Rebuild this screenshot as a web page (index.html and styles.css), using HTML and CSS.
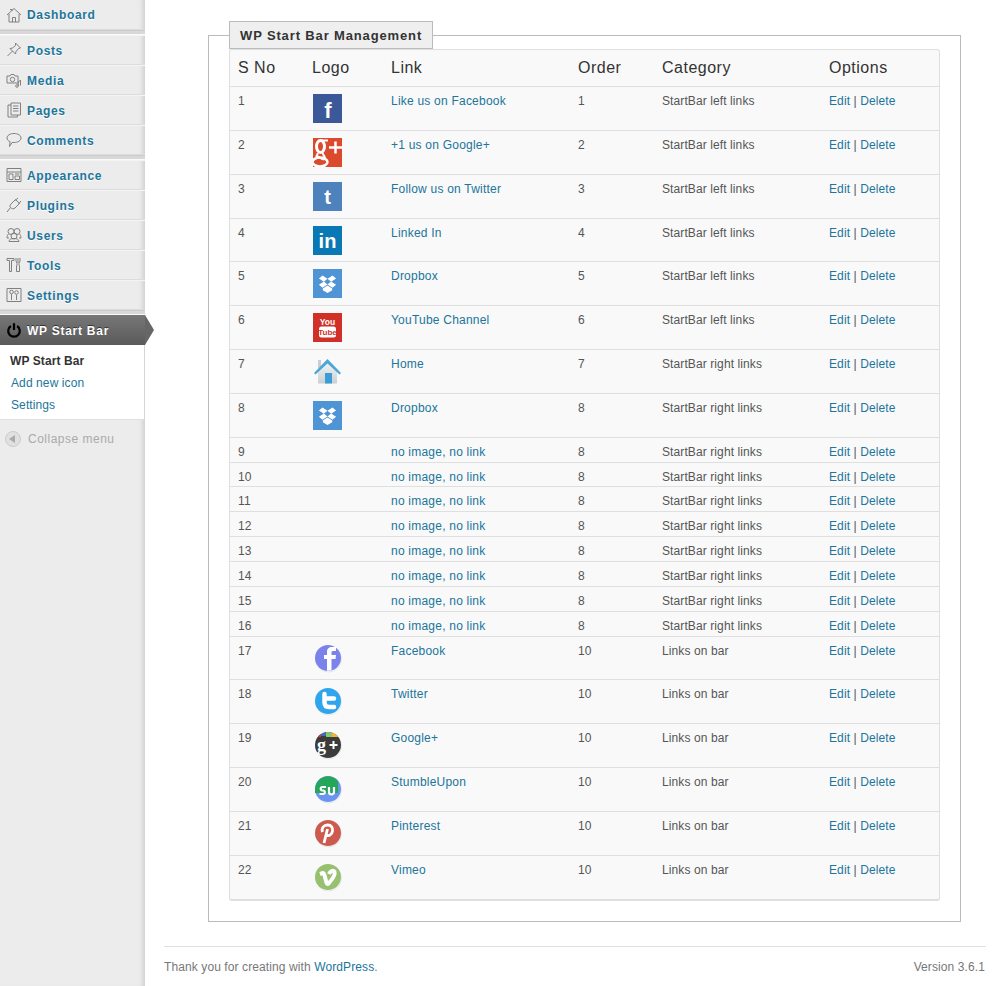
FILE: index.html
```html
<!DOCTYPE html>
<html lang="en">
<head>
    <meta charset="UTF-8" />
    <meta name="viewport" content="width=device-width, initial-scale=1.0"/>
    <title>WP Start Bar Management</title>
    <link rel="stylesheet" href="styles.css">
</head>
<body>

<svg class="defs" width="0" height="0">
    <symbol id="dropbox" viewBox="0 0 29 29">
        <rect width="29" height="29" fill="#4f94d4"/>
        <path d="M9.5 6.5l5 3.2-3.6 3-5-3.1zM19.500 6.500l-5 3.200 3.600 3 5-3.100zM5.900 15.700l5-3.100 3.600 3-5 3.100zM23.100 15.700l-5-3.100-3.600 3 5 3.100zM9.800 19.500l4.700-3 4.700 3v1.700l-4.700 2.800-4.700-2.800z" fill="#fff"/>
    </symbol>
    <symbol id="disc" viewBox="0 0 29 29">
        <circle cx="15.500" cy="15" r="13" fill="#fff" stroke="#e6e6e6"/>
    </symbol>
    <clipPath id="round"><circle cx="15" cy="14" r="13"/></clipPath>
    <linearGradient id="wall" x1="0" y1="0" x2="0" y2="1">
        <stop offset="0" stop-color="#f2f5f6"/>
        <stop offset="1" stop-color="#c9cfd2"/>
    </linearGradient>
</svg>

<aside class="sidebar">
    <ul class="menu">
        <li class="item first">
            <svg class="mi" viewBox="0 0 16 16"><path d="M1 8l7-6.500L15 8M3 7v8h10V7M6.500 15v-4.500h3V15M4 2.500h2v1.500" /></svg>
            <a href="#">Dashboard</a>
        </li>
        <li class="sep"></li>
        <li class="item">
            <svg class="mi" viewBox="0 0 16 16"><path d="M9.500 1l5 5-2 .5-2.500 3-.5 2.500L4 6.500l2.500-.5 3-2.500zM6.500 9L1.500 14" /></svg>
            <a href="#">Posts</a>
        </li>
        <li class="item">
            <svg class="mi" viewBox="0 0 16 16"><path d="M1 4h3l1-1.500h3L9 4h3v7H1z"/><circle cx="6.500" cy="7.500" r="2.200"/><circle cx="11" cy="14" r="1.300"/><path d="M14.500 8v5.500M12.300 14V9.500l2.200-1"/></svg>
            <a href="#">Media</a>
        </li>
        <li class="item">
            <svg class="mi" viewBox="0 0 16 16"><path d="M5 1h9.500v12H5zM5 3H2v12h9.500v-2M7 4h5.500M7 6.500h5.500M7 9h5.500"/></svg>
            <a href="#">Pages</a>
        </li>
        <li class="item">
            <svg class="mi" viewBox="0 0 16 16"><path d="M8 1.500c3.800 0 7 1.800 7 4.500s-3.200 4.500-7 4.500c-.7 0-1.300 0-1.800-.1L3.500 14.500l.6-4.800C2.200 8.900 1 7.600 1 6c0-2.700 3.200-4.500 7-4.500z"/></svg>
            <a href="#">Comments</a>
        </li>
        <li class="sep"></li>
        <li class="item">
            <svg class="mi" viewBox="0 0 16 16"><path d="M1 1.500h14v13H1zM1 5h14M3 7h4v5.500H3zM9 7h4.500M9 9h4.500v3.500H9z"/></svg>
            <a href="#">Appearance</a>
        </li>
        <li class="item">
            <svg class="mi" viewBox="0 0 16 16"><path d="M5 7l4.500-4.500 4 4L9 11c-1.500 1.200-3 1-4.500-.5C3.500 9.500 3.800 8.200 5 7zM9 3.500l3-2.500M12.500 7l2.500-3M4.500 10.500L1 15"/></svg>
            <a href="#">Plugins</a>
        </li>
        <li class="item">
            <svg class="mi" viewBox="0 0 16 16"><circle cx="5" cy="4.500" r="3"/><circle cx="11" cy="4.500" r="3"/><circle cx="8" cy="9" r="3"/><path d="M3 14.500c0-2 2-3 5-3s5 1 5 3zM2.500 7C1.500 8 1 9 1 11h2M13.500 7c1 1 1.500 2 1.500 4h-2"/></svg>
            <a href="#">Users</a>
        </li>
        <li class="item">
            <svg class="mi" viewBox="0 0 16 16"><path d="M1 1.500h7v2H5.500v11h-2v-11H1zM12 1v5M10 1v3l1 2.500v1.500l-.5 1v5.500h3V9L13 8V6.500L14 4V1"/></svg>
            <a href="#">Tools</a>
        </li>
        <li class="item">
            <svg class="mi" viewBox="0 0 16 16"><path d="M1 1.500h14v13H1zM5.500 7v6M10.500 8v5"/><circle cx="5.500" cy="5" r="1.800"/><circle cx="10.500" cy="5.500" r="1.800"/></svg>
            <a href="#">Settings</a>
        </li>
        <li class="sep"></li>
        <li class="current">
            <svg class="power" viewBox="0 0 18 18"><path d="M5.500 4.500a6.500 6.500 0 1 0 7 0M9 1.500V9"/></svg>
            <a href="#">WP Start Bar</a>
        </li>
        <li class="submenu">
            <a class="on" href="#">WP Start Bar</a>
            <a href="#">Add new icon</a>
            <a href="#">Settings</a>
        </li>
        <li class="collapse">
            <span class="collapse-btn"><span class="tri"></span></span>
            Collapse menu
        </li>
    </ul>
</aside>

<main class="content">
    <fieldset class="box">
        <legend>WP Start Bar Management</legend>
        <table class="links">
            <colgroup>
                <col class="c1"><col class="c2"><col class="c3"><col class="c4"><col class="c5"><col class="c6">
            </colgroup>
            <thead>
                <tr><th>S No</th><th>Logo</th><th>Link</th><th>Order</th><th>Category</th><th>Options</th></tr>
            </thead>
            <tbody>
                <tr class="big"><td>1</td><td><svg class="logo" viewBox="0 0 29 29"><rect width="29" height="29" fill="#3b5998"/><text x="15" y="24" class="g" font-size="22" fill="#fff">f</text></svg></td><td class="lnk"><a href="#">Like us on Facebook</a></td><td>1</td><td>StartBar left links</td><td class="opt"><a href="#">Edit</a> | <a href="#">Delete</a></td></tr>
                <tr class="big"><td>2</td><td><svg class="logo" viewBox="0 0 29 29"><rect width="29" height="29" fill="#dc4a2e"/><g fill="none" stroke="#fff"><ellipse cx="7.500" cy="8.500" rx="4" ry="6" stroke-width="3"/><ellipse cx="7" cy="24" rx="7.500" ry="4.500" stroke-width="2.500"/><path d="M5 15l-1.500 3 6 3c3 1.500 3-2 1-4l-1-2M8 2.500h7" stroke-width="2"/><path d="M16 9.500h13M22.500 3.500v12" stroke-width="2.500"/></g></svg></td><td class="lnk"><a href="#">+1 us on Google+</a></td><td>2</td><td>StartBar left links</td><td class="opt"><a href="#">Edit</a> | <a href="#">Delete</a></td></tr>
                <tr class="big"><td>3</td><td><svg class="logo" viewBox="0 0 29 29"><rect width="29" height="29" fill="#4d82bd"/><text x="14.500" y="22" class="g" font-size="20" fill="#fff">t</text></svg></td><td class="lnk"><a href="#">Follow us on Twitter</a></td><td>3</td><td>StartBar left links</td><td class="opt"><a href="#">Edit</a> | <a href="#">Delete</a></td></tr>
                <tr class="big"><td>4</td><td><svg class="logo" viewBox="0 0 29 29"><rect width="29" height="29" fill="#0a78b5"/><text x="14.500" y="22" class="g" font-size="20" fill="#fff">in</text></svg></td><td class="lnk"><a href="#">Linked In</a></td><td>4</td><td>StartBar left links</td><td class="opt"><a href="#">Edit</a> | <a href="#">Delete</a></td></tr>
                <tr class="big"><td>5</td><td><svg class="logo"><use href="#dropbox"/></svg></td><td class="lnk"><a href="#">Dropbox</a></td><td>5</td><td>StartBar left links</td><td class="opt"><a href="#">Edit</a> | <a href="#">Delete</a></td></tr>
                <tr class="big"><td>6</td><td><svg class="logo" viewBox="0 0 29 29"><rect width="29" height="29" fill="#d03027"/><text x="14.500" y="11.500" class="g" font-size="8.500" fill="#fff">You</text><rect x="6" y="13.500" width="17" height="11" rx="2.500" fill="#fff"/><text x="14.500" y="22" class="g" font-size="8" fill="#d03027">Tube</text></svg></td><td class="lnk"><a href="#">YouTube Channel</a></td><td>6</td><td>StartBar left links</td><td class="opt"><a href="#">Edit</a> | <a href="#">Delete</a></td></tr>
                <tr class="big"><td>7</td><td><svg class="logo" viewBox="0 0 29 29"><path d="M5 3h3v8H5z" fill="#c8ced2"/><path d="M5 14l9.500-9L24 14v12.500H5z" fill="url(#wall)"/><path d="M12 16h7v10.500h-7z" fill="#3d9bd6"/><path d="M1 16L14.500 2 28 16l-1.500 1.500L14.500 6.500 2.500 17.500z" fill="#4ca6d8"/></svg></td><td class="lnk"><a href="#">Home</a></td><td>7</td><td>StartBar right links</td><td class="opt"><a href="#">Edit</a> | <a href="#">Delete</a></td></tr>
                <tr class="big"><td>8</td><td><svg class="logo"><use href="#dropbox"/></svg></td><td class="lnk"><a href="#">Dropbox</a></td><td>8</td><td>StartBar right links</td><td class="opt"><a href="#">Edit</a> | <a href="#">Delete</a></td></tr>
                <tr class="small"><td>9</td><td></td><td class="lnk"><a href="#">no image, no link</a></td><td>8</td><td>StartBar right links</td><td class="opt"><a href="#">Edit</a> | <a href="#">Delete</a></td></tr>
                <tr class="small"><td>10</td><td></td><td class="lnk"><a href="#">no image, no link</a></td><td>8</td><td>StartBar right links</td><td class="opt"><a href="#">Edit</a> | <a href="#">Delete</a></td></tr>
                <tr class="small"><td>11</td><td></td><td class="lnk"><a href="#">no image, no link</a></td><td>8</td><td>StartBar right links</td><td class="opt"><a href="#">Edit</a> | <a href="#">Delete</a></td></tr>
                <tr class="small"><td>12</td><td></td><td class="lnk"><a href="#">no image, no link</a></td><td>8</td><td>StartBar right links</td><td class="opt"><a href="#">Edit</a> | <a href="#">Delete</a></td></tr>
                <tr class="small"><td>13</td><td></td><td class="lnk"><a href="#">no image, no link</a></td><td>8</td><td>StartBar right links</td><td class="opt"><a href="#">Edit</a> | <a href="#">Delete</a></td></tr>
                <tr class="small"><td>14</td><td></td><td class="lnk"><a href="#">no image, no link</a></td><td>8</td><td>StartBar right links</td><td class="opt"><a href="#">Edit</a> | <a href="#">Delete</a></td></tr>
                <tr class="small"><td>15</td><td></td><td class="lnk"><a href="#">no image, no link</a></td><td>8</td><td>StartBar right links</td><td class="opt"><a href="#">Edit</a> | <a href="#">Delete</a></td></tr>
                <tr class="small"><td>16</td><td></td><td class="lnk"><a href="#">no image, no link</a></td><td>8</td><td>StartBar right links</td><td class="opt"><a href="#">Edit</a> | <a href="#">Delete</a></td></tr>
                <tr class="big"><td>17</td><td><svg class="logo" viewBox="0 0 29 29"><use href="#disc"/><circle cx="15" cy="14" r="13" fill="#7b83eb"/><path d="M14 26.800V15h-3v-4h3V8c0-3.500 2-5 5-5h4v4h-3c-1 0-1.500.5-1.500 1.500V11H23l-.5 4h-4v11.500z" fill="#fff"/></svg></td><td class="lnk"><a href="#">Facebook</a></td><td>10</td><td>Links on bar</td><td class="opt"><a href="#">Edit</a> | <a href="#">Delete</a></td></tr>
                <tr class="big"><td>18</td><td><svg class="logo" viewBox="0 0 29 29"><use href="#disc"/><circle cx="15" cy="14" r="13" fill="#2fa5ee"/><path d="M11.500 7v8.500q0 4.500 4.500 4.500h5M11.500 11.500H21" fill="none" stroke="#fff" stroke-width="4.500" stroke-linecap="round"/></svg></td><td class="lnk"><a href="#">Twitter</a></td><td>10</td><td>Links on bar</td><td class="opt"><a href="#">Edit</a> | <a href="#">Delete</a></td></tr>
                <tr class="big"><td>19</td><td><svg class="logo" viewBox="0 0 29 29"><use href="#disc"/><circle cx="15" cy="14" r="13" fill="#3b3b3b"/><g clip-path="url(#round)"><rect x="2" y="0" width="6" height="6" fill="#d6342c"/><rect x="8" y="0" width="5" height="5" fill="#3b6fb5"/><rect x="13" y="0" width="6" height="6" fill="#8cc36b"/><rect x="19" y="0" width="8" height="6" fill="#f2b632"/></g><text x="4" y="20" class="s" font-size="18" fill="#fff">g</text><path d="M16.500 14h8M20.500 10v8" stroke="#fff" stroke-width="2"/></svg></td><td class="lnk"><a href="#">Google+</a></td><td>10</td><td>Links on bar</td><td class="opt"><a href="#">Edit</a> | <a href="#">Delete</a></td></tr>
                <tr class="big"><td>20</td><td><svg class="logo" viewBox="0 0 29 29"><use href="#disc"/><circle cx="15" cy="14" r="13" fill="#6b94f0"/><path d="M2 14a13 13 0 0 1 23-8v12H2z" fill="#25a75b"/><path d="M6.500 19h4a1.800 1.800 0 0 0 0-3.500H9A1.800 1.800 0 0 1 9 12h4M16 12v5a2.500 2.500 0 0 0 5 0v-5" fill="none" stroke="#fff" stroke-width="2.200"/></svg></td><td class="lnk"><a href="#">StumbleUpon</a></td><td>10</td><td>Links on bar</td><td class="opt"><a href="#">Edit</a> | <a href="#">Delete</a></td></tr>
                <tr class="big"><td>21</td><td><svg class="logo" viewBox="0 0 29 29"><use href="#disc"/><circle cx="15" cy="14" r="13" fill="#cc5a4e"/><path d="M9.500 13C8 9 11 6 14.500 6c4 0 5.500 3 5 6-.5 4-4 5.500-6 4M14.500 10L11 24" fill="none" stroke="#fff" stroke-width="2.800"/></svg></td><td class="lnk"><a href="#">Pinterest</a></td><td>10</td><td>Links on bar</td><td class="opt"><a href="#">Edit</a> | <a href="#">Delete</a></td></tr>
                <tr class="big"><td>22</td><td><svg class="logo" viewBox="0 0 29 29"><use href="#disc"/><circle cx="15" cy="14" r="13" fill="#97c170"/><path d="M7 11l1.500-.5c2-1.500 3 .5 4 5.500s2 6 3.500 4c3.500-4 6.500-8 5.500-11-1-2-4-1.500-5.500 2" fill="none" stroke="#fff" stroke-width="4"/></svg></td><td class="lnk"><a href="#">Vimeo</a></td><td>10</td><td>Links on bar</td><td class="opt"><a href="#">Edit</a> | <a href="#">Delete</a></td></tr>
            </tbody>
        </table>
    </fieldset>

    <footer class="foot">
        <span>Thank you for creating with <a href="#">WordPress</a>.</span>
        <span>Version 3.6.1</span>
    </footer>
</main>

</body>
</html>
```
FILE: styles.css
```css
html, body { margin: 0; padding: 0; }
body {
    font-family: "Liberation Sans", Arial, sans-serif;
    font-size: 12px;
    letter-spacing: .1px;
    color: #555;
    background: #fff;
    display: flex;
    min-height: 986px;
}
a { color: #21759b; text-decoration: none; }
.defs { position: absolute; }

/* sidebar */
.sidebar {
    width: 145px;
    flex: none;
    background: #ececec;
    box-shadow: inset -6px 0 5px -4px #ccc;
    position: relative;
}
.menu { list-style: none; margin: 0; padding: 0; }
.item {
    height: 28px;
    display: flex;
    align-items: center;
    gap: 5px;
    padding-left: 6px;
    border-top: 1px solid #f4f4f4;
    border-bottom: 1px solid #dcdcdc;
    font-weight: bold;
    font-size: 12px;
    letter-spacing: .65px;
}
.item.first { height: 29px; border-top: 0; }
.item a { text-shadow: 0 1px 0 #fff; padding-top: 1px; }
.mi {
    width: 16px;
    height: 16px;
    fill: none;
    stroke: #808080;
    stroke-width: 1;
    flex: none;
}
.sep {
    height: 5px;
    box-sizing: border-box;
    background: #d8d8d8;
    border-top: 1px solid #ccc;
    border-bottom: 1px solid #fafafa;
}
.current {
    height: 30px;
    display: flex;
    align-items: center;
    gap: 5px;
    padding-left: 6px;
    background: linear-gradient(#777, #5a5a5a);
    font-weight: bold;
    letter-spacing: .75px;
    position: relative;
}
.current a { color: #fff; text-shadow: 0 -1px 0 #333; padding-top: 1px; }
.current::after {
    content: "";
    position: absolute;
    left: 145px;
    top: 0;
    border-left: 9px solid #666;
    border-top: 15px solid transparent;
    border-bottom: 15px solid transparent;
}
.power {
    width: 16px;
    height: 16px;
    fill: none;
    stroke: #000;
    stroke-width: 2.500;
    flex: none;
}
.submenu {
    background: #fff;
    height: 75px;
    box-sizing: border-box;
    margin-right: 1px;
    padding-top: 5px;
    border-bottom: 1px solid #dfdfdf;
    display: flex;
    flex-direction: column;
}
.submenu a { padding-left: 11px; line-height: 22px; }
.submenu a.on { color: #333; font-weight: bold; padding-left: 10px; }
.collapse {
    display: flex;
    align-items: center;
    gap: 7px;
    padding: 11px 0 0 5px;
    color: #aaa;
    letter-spacing: .5px;
}
.collapse-btn {
    width: 16px;
    height: 16px;
    box-sizing: border-box;
    border: 1px solid #ccc;
    border-radius: 50%;
    background: #e0e0e0;
    display: flex;
    align-items: center;
    justify-content: center;
}
.tri {
    border-right: 6px solid #aaa;
    border-top: 4px solid transparent;
    border-bottom: 4px solid transparent;
    margin-left: -2px;
}

/* main area */
.content {
    flex: 1;
    padding: 0 19px;
    min-width: 0;
}
.box {
    margin: 21px 25px 0 44px;
    padding: 0 20px 20px;
    border: 1px solid #bbb;
    min-width: 0;
}
.box legend {
    padding: 0 10px;
    height: 26px;
    line-height: 27px;
    border: 1px solid #bbb;
    background: #efefef;
    font-weight: bold;
    font-size: 13px;
    letter-spacing: .86px;
    color: #333;
}
.links {
    width: 711px;
    table-layout: fixed;
    border-collapse: separate;
    border-spacing: 0;
    background: #f9f9f9;
    border: 1px solid #dfdfdf;
    border-bottom-width: 2px;
    border-radius: 3px;
}
.c1 { width: 74px; }
.c2 { width: 79px; }
.c3 { width: 187px; }
.c4 { width: 84px; }
.c5 { width: 167px; }
.links th {
    font-weight: normal;
    font-size: 16px;
    letter-spacing: .5px;
    text-align: left;
    padding: 9px 8px 3px;
    height: 24px;
    border-bottom: 1px solid #dfdfdf;
    color: #333;
    vertical-align: top;
}
.links td {
    padding: 5px 8px 0;
    line-height: 18px;
    vertical-align: top;
    border-bottom: 1px solid #dfdfdf;
    box-sizing: border-box;
}
.links tr:last-child td { border-bottom: 0; height: 43px; }
.links td.lnk { letter-spacing: .22px; }
.big td { height: 43.850px; }
.small td { height: 24.850px; }
.logo {
    display: block;
    width: 29px;
    height: 29px;
    margin: 2px 0 0 1px;
}
.g { font-family: "Liberation Sans", sans-serif; font-weight: bold; text-anchor: middle; letter-spacing: 0; }
.s { font-family: "Liberation Serif", serif; font-weight: bold; letter-spacing: 0; }

/* footer */
.foot {
    margin-top: 24px;
    border-top: 1px solid #dfdfdf;
    padding-top: 13px;
    display: flex;
    justify-content: space-between;
    color: #777;
    line-height: 14px;
    padding-right: 1px;
}
```
